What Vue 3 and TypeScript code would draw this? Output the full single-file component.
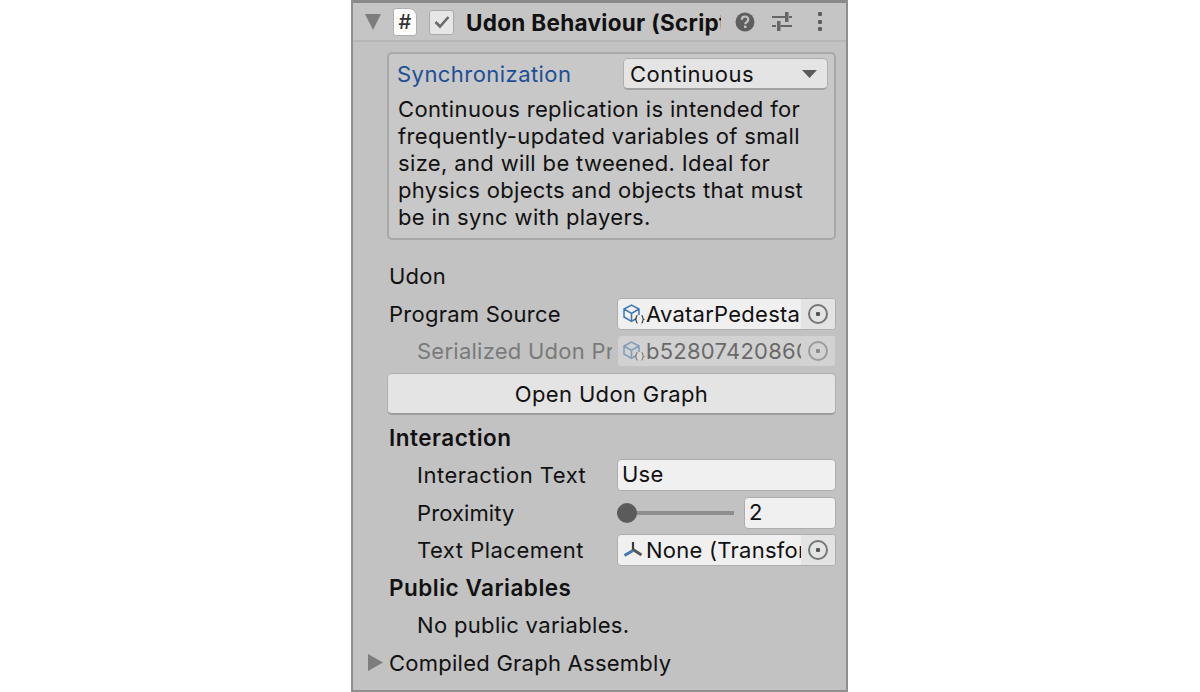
<script setup lang="ts">
const description = [
  'Continuous replication is intended for',
  'frequently-updated variables of small',
  'size, and will be tweened. Ideal for',
  'physics objects and objects that must',
  'be in sync with players.',
]
</script>

<template>
  <div class="page">
    <div class="panel">
      <header class="header">
        <svg class="fold" width="18" height="16" viewBox="0 0 18 16"><path d="M1 0h16l-8 16z" fill="#7d7d7d" /></svg>
        <div class="script-icon">#</div>
        <div class="check">
          <svg width="18" height="14" viewBox="0 0 18 14"><path d="M2.500 7l4.500 4.500L15.500 2" fill="none" stroke="#6a6a6a" stroke-width="2.600" /></svg>
        </div>
        <div class="title">Udon Behaviour (Script)</div>
        <svg class="help" width="20" height="20" viewBox="0 0 20 20">
          <circle cx="10" cy="10" r="9.500" fill="#5f5f5f" />
          <path d="M6.800 7.700c0-4.200 6.500-4.200 6.500-.2 0 2.500-3.100 2.500-3.100 4.800" fill="none" stroke="#c2c2c2" stroke-width="2.200" />
          <rect x="9" y="13.600" width="2.400" height="2.400" fill="#c2c2c2" />
        </svg>
        <svg class="presets" width="20" height="20" viewBox="0 0 20 20" fill="#666">
          <rect x="0" y="4" width="13" height="2" /><rect x="13" y="0" width="3.500" height="10" /><rect x="17" y="4" width="3" height="2" />
          <rect x="0" y="13" width="4" height="2" /><rect x="5" y="9" width="3.500" height="10" /><rect x="8.500" y="13" width="11.500" height="2" />
        </svg>
        <svg class="menu" width="6" height="20" viewBox="0 0 6 20" fill="#5f5f5f">
          <rect x="1" y="0" width="4" height="4" rx="1" /><rect x="1" y="8" width="4" height="4" rx="1" /><rect x="1" y="15" width="4" height="4" rx="1" />
        </svg>
      </header>

      <div class="body">
        <section class="sync-box">
          <div class="sync-top">
            <span class="sync-label">Synchronization</span>
            <div class="dropdown">
              <span>Continuous</span>
              <svg width="15" height="8" viewBox="0 0 15 8"><path d="M0 0h15l-7.500 8z" fill="#5a5a5a" /></svg>
            </div>
          </div>
          <p class="description">
            <span v-for="line in description" :key="line">{{ line }}</span>
          </p>
        </section>

        <div class="row plain first">Udon</div>

        <div class="row">
          <span class="label">Program Source</span>
          <div class="field object">
            <svg class="asset" width="22" height="20" viewBox="0 0 22 20">
              <path d="M1 5 8.500 1 16 5v8l-7.500 4.500L1 13zM1 5l7.500 4.500L16 5M8.500 9.500v8" fill="none" stroke="#3f78b5" stroke-width="1.500" />
              <path d="M13.500 11h7v8h-7z" fill="#f0f0f0" />
              <path d="M14.500 11.500c-1.800 0-.8 3.300-2 3.800 1.200.5.200 3.700 2 3.700M18.500 11.500c1.800 0 .8 3.300 2 3.800-1.200.5-.2 3.700-2 3.700" fill="none" stroke="#444" stroke-width="1.300" />
            </svg>
            <span class="value clip">AvatarPedestal</span>
            <span class="picker"><i></i></span>
          </div>
        </div>

        <div class="row disabled">
          <span class="label indent clip-label">Serialized Udon Program Asset</span>
          <div class="field object">
            <svg class="asset" width="22" height="20" viewBox="0 0 22 20">
              <path d="M1 5 8.500 1 16 5v8l-7.500 4.500L1 13zM1 5l7.500 4.500L16 5M8.500 9.500v8" fill="none" stroke="#3f78b5" stroke-width="1.500" />
              <path d="M13.500 11h7v8h-7z" fill="#f0f0f0" />
              <path d="M14.500 11.500c-1.800 0-.8 3.300-2 3.800 1.200.5.200 3.700 2 3.700M18.500 11.500c1.800 0 .8 3.300 2 3.800-1.200.5-.2 3.700-2 3.700" fill="none" stroke="#444" stroke-width="1.300" />
            </svg>
            <span class="value clip">b52807420860</span>
            <span class="picker"><i></i></span>
          </div>
        </div>

        <button class="graph-btn" type="button">Open Udon Graph</button>

        <div class="row plain strong interaction">Interaction</div>

        <div class="row">
          <span class="label indent wide">Interaction Text</span>
          <div class="field text">Use</div>
        </div>

        <div class="row">
          <span class="label indent tight">Proximity</span>
          <div class="slider">
            <div class="track"><span class="thumb"></span></div>
            <div class="field number">2</div>
          </div>
        </div>

        <div class="row">
          <span class="label indent wide">Text Placement</span>
          <div class="field object">
            <svg class="asset" width="22" height="20" viewBox="0 0 22 20">
              <path d="M10 2v8" stroke="#3b3b3b" stroke-width="2.200" />
              <path d="M10 9.500 18.500 15" stroke="#555" stroke-width="2.800" />
              <path d="M10 10.500 1.500 15.500" stroke="#3f78b5" stroke-width="3" />
            </svg>
            <span class="value clip">None (Transform)</span>
            <span class="picker"><i></i></span>
          </div>
        </div>

        <div class="row plain strong">Public Variables</div>
        <div class="row plain indent-plain">No public variables.</div>
        <div class="row plain foldout">
          <svg width="15" height="17" viewBox="0 0 15 17"><path d="M0 0l15 8.500L0 17z" fill="#7d7d7d" /></svg>
          <span>Compiled Graph Assembly</span>
        </div>
      </div>
    </div>
  </div>
</template>

<style>
html, body { margin: 0; background: #fff; }
</style>

<style scoped>
.page {
  width: 1200px;
  height: 692px;
  display: flex;
  justify-content: center;
  overflow: hidden;
  font-family: Inter, "Noto Sans", sans-serif;
  font-size: 22px;
  color: #111;
}
.panel {
  box-sizing: border-box;
  width: 497px;
  height: 692px;
  margin-left: -1px;
  background: #c2c2c2;
  border-left: 2px solid #8f8f8f;
  border-right: 2px solid #8f8f8f;
  border-bottom: 2px solid #8f8f8f;
  display: flex;
  flex-direction: column;
}
.header {
  box-sizing: border-box;
  height: 42px;
  border-top: 3px solid #8a8a8a;
  border-bottom: 2px solid #b6b6b6;
  background: #c5c5c5;
  display: flex;
  align-items: center;
  padding: 1px 0 0 11px;
}
.fold { flex: none; }
.script-icon {
  flex: none;
  box-sizing: border-box;
  width: 24px;
  height: 28px;
  margin-left: 11px;
  background: #fff;
  border: 1px solid #b0b0b0;
  border-radius: 3px 8px 3px 3px;
  display: flex;
  align-items: center;
  justify-content: center;
  font-weight: 500;
  font-size: 20px;
  color: #333;
}
.check {
  flex: none;
  box-sizing: border-box;
  width: 25px;
  height: 25px;
  margin-left: 12px;
  background: #e6e6e6;
  border: 1px solid #aaa;
  border-radius: 3px;
  display: flex;
  align-items: center;
  justify-content: center;
}
.title {
  width: 255px;
  margin-left: 12px;
  flex: none;
  overflow: hidden;
  white-space: nowrap;
  font-size: 22.500px;
  font-weight: 700;
  letter-spacing: 0.300px;
}
.help { flex: none; margin-left: 14px; }
.presets { flex: none; margin-left: 17px; }
.menu { flex: none; margin-left: 25px; }

.body {
  flex: 1;
  padding: 10px 10px 0 16px;
  display: flex;
  flex-direction: column;
}
.sync-box {
  box-sizing: border-box;
  margin-left: 18px;
  height: 188px;
  background: #c8c8c8;
  border: 2px solid #a8a8a8;
  border-radius: 5px;
  padding: 3px 6px 0 8px;
  margin-bottom: 17px;
}
.sync-top {
  display: flex;
  align-items: center;
  justify-content: space-between;
  height: 34px;
}
.sync-label { color: #1c4f97; letter-spacing: 0.450px; }
.dropdown {
  box-sizing: border-box;
  width: 205px;
  height: 32px;
  background: #e4e4e4;
  border: 1px solid #b0b0b0;
  border-bottom: 2px solid #a2a2a2;
  border-radius: 5px;
  display: flex;
  align-items: center;
  justify-content: space-between;
  padding: 0 10px 0 6px;
  letter-spacing: 0.550px;
}
.description {
  margin: 5px 0 0 1px;
  display: flex;
  flex-direction: column;
  line-height: 27px;
  letter-spacing: 0.350px;
  white-space: nowrap;
}
.row {
  height: 37.600px;
  display: flex;
  align-items: center;
  margin-left: 20px;
  letter-spacing: 0.250px;
  white-space: nowrap;
}
.row.first { height: 38px; }
.label { width: 228px; flex: none; }
.indent { box-sizing: border-box; padding-left: 28px; }
.wide { letter-spacing: 0.500px; }
.tight { letter-spacing: 0.100px; }
.clip-label { overflow: hidden; width: 223px; margin-right: 5px; }
.indent-plain { padding-left: 28px; letter-spacing: 0.330px; }
.disabled { color: #7a7a7a; }
.disabled .field { background: #e0e0e0; color: #111; opacity: 0.5; border-color: #c2c2c2; }
.strong { font-size: 22.500px; font-weight: 600; letter-spacing: 0.500px; }
.interaction { height: 41px; padding-top: 4px; box-sizing: border-box; }
.field {
  box-sizing: border-box;
  width: 219px;
  height: 32px;
  background: #f0f0f0;
  border: 1px solid #adadad;
  border-radius: 4px;
}
.object {
  display: flex;
  align-items: center;
  padding-left: 5px;
  overflow: hidden;
}
.asset { flex: none; margin-right: 1px; }
.value { flex: 1; min-width: 0; }
.clip { overflow: hidden; white-space: nowrap; }
.picker {
  flex: none;
  width: 34px;
  height: 100%;
  background: #e3e3e3;
  display: flex;
  align-items: center;
  justify-content: center;
}
.picker i {
  box-sizing: border-box;
  width: 20px;
  height: 20px;
  border: 2px solid #767676;
  border-radius: 50%;
  background: radial-gradient(circle, #555 0 2px, transparent 2.500px);
}
.text { padding-left: 4px; line-height: 29px; }
.slider { width: 219px; display: flex; align-items: center; justify-content: space-between; }
.track {
  position: relative;
  width: 117px;
  height: 4px;
  background: #8e8e8e;
}
.thumb {
  position: absolute;
  left: 0;
  top: -8px;
  width: 20px;
  height: 20px;
  border-radius: 50%;
  background: #5b5b5b;
}
.number { width: 92px; padding-left: 4px; line-height: 29px; }
.graph-btn {
  box-sizing: border-box;
  margin: 3px 0 0 18px;
  height: 42px;
  flex: none;
  font: inherit;
  letter-spacing: 0.350px;
  color: #111;
  background: #e4e4e4;
  border: 1px solid #b0b0b0;
  border-bottom: 2px solid #9c9c9c;
  border-radius: 5px;
}
.foldout { margin-left: -1px; gap: 6px; }
</style>
